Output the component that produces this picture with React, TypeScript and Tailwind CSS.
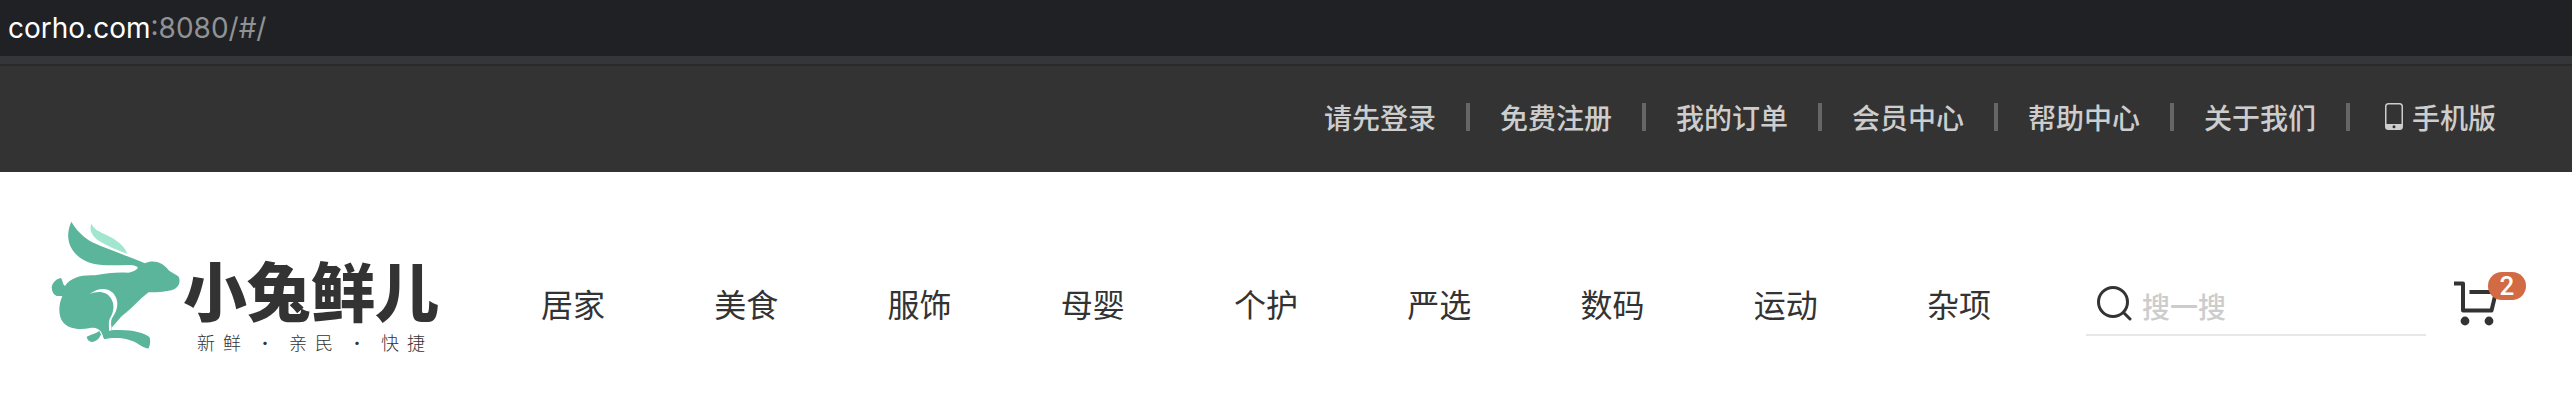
import type { ReactNode } from "react";

const accountLinks = ["请先登录", "免费注册", "我的订单", "会员中心", "帮助中心", "关于我们"];

const categories = ["居家", "美食", "服饰", "母婴", "个护", "严选", "数码", "运动", "杂项"];

const slogan = ["新鲜", "亲民", "快捷"];

function PhoneIcon() {
  return (
    <svg viewBox="0 0 28 28" className="size-7" aria-hidden="true">
      <path
        fill="currentColor"
        fillRule="evenodd"
        d="M8.500 0h11a3.500 3.500 0 0 1 3.500 3.500v20a3.500 3.500 0 0 1-3.500 3.500H8.500A3.500 3.500 0 0 1 5 23.500V3.500A3.500 3.500 0 0 1 8.500 0Zm0 1.500a2 2 0 0 0-2 2V21h15V3.500a2 2 0 0 0-2-2ZM14 22.200a1.500 1.500 0 1 0 0 3 1.500 1.500 0 0 0 0-3Z"
      />
    </svg>
  );
}

function RabbitMark() {
  return (
    <svg viewBox="60 60 390 390" className="size-[130px] shrink-0" aria-hidden="true">
      <path
        fill="#5ab59b"
        d="M124 65C113 90 113 110 117 127C126 160 155 183 190 191C225 199 262 195 297 195C314 195 325 200 323 205C318 211 307 216 295 218C262 216 228 219 195 226C155 224 122 232 105 258C98 254 98 240 93 234C79 236 67 248 65 262C66 276 71 285 80 288L97 288C85 315 85 345 97 364C113 388 150 391 180 384C198 381 209 388 215 398C219 408 220 415 224 418C252 411 297 413 328 434C342 443 352 446 356 445C361 433 362 420 358 411C344 398 300 386 243 391L247 380C261 366 270 352 280 344C300 332 328 297 356 277C386 277 412 276 432 268C448 260 451 245 447 232C440 223 425 219 415 210C400 188 370 178 345 190C328 183 310 176 292 169C255 154 222 144 187 127C161 112 138 90 124 65Z"
      />
      <path
        fill="#fff"
        d="M178 283C205 262 233 262 250 280C269 303 264 330 246 355C242 364 243 374 245 384L242 392L237 392C238 380 234 368 240 355C252 335 254 315 244 297C230 273 202 272 178 283Z"
      />
      <path
        fill="#5ab59b"
        d="M170 410C183 403 197 402 208 393L213 403C208 417 198 425 185 426C176 424 171 418 170 410Z"
      />
      <path
        fill="#a3e6cf"
        d="M184 71C195 94 218 97 243 112C268 126 284 142 292 161C262 150 232 138 206 122C186 108 177 90 184 71Z"
      />
    </svg>
  );
}

function SearchIcon() {
  return (
    <svg viewBox="0 0 36 36" className="size-9 shrink-0" fill="none" stroke="#333" strokeWidth="3" aria-hidden="true">
      <circle cx="17" cy="17" r="14.500" />
      <path d="m28 28 6 6" strokeLinecap="round" />
    </svg>
  );
}

function CartIcon() {
  return (
    <svg viewBox="0 0 44 46" className="h-[46px] w-11" fill="none" stroke="#333" strokeWidth="4" strokeLinejoin="round" aria-hidden="true">
      <path d="M0 2.500h9v27h28.500L42 11H15.500" />
      <circle cx="11" cy="40" r="4.400" fill="#333" stroke="none" />
      <circle cx="35" cy="40" r="4.400" fill="#333" stroke="none" />
    </svg>
  );
}

function TopItem({ children, first = false }: { children: ReactNode; first?: boolean }) {
  return (
    <li className="flex items-center">
      {!first && <span className="mx-[30px] h-7 w-1 bg-[#666]" />}
      <a href="#" className="flex items-center gap-1">
        {children}
      </a>
    </li>
  );
}

export default function App() {
  return (
    <div className="bg-white font-['Noto_Sans_CJK_SC',sans-serif] text-[#333]">
      <div className="flex h-14 items-center bg-[#202124] px-2 font-[Inter,sans-serif] text-[28px] text-[#919295]">
        <span className="text-white">corho.com</span>:8080/#/
      </div>
      <div className="h-2 bg-[#35363a]" />

      <nav className="border-t-2 border-[#28292b] bg-[#333] pb-1">
        <ul className="flex h-[102px] items-center justify-end pr-[76px] text-[28px] leading-7 font-medium text-[#cdcdcd]">
          {accountLinks.map((label, i) => (
            <TopItem key={label} first={i === 0}>
              {label}
            </TopItem>
          ))}
          <TopItem>
            <PhoneIcon />
            手机版
          </TopItem>
        </ul>
      </nav>

      <header className="flex items-start pt-12 pr-[74px] pl-[50px]">
        <a href="#" className="flex w-[390px] shrink-0">
          <RabbitMark />
          <div className="pt-7 pl-[3px]">
            <h1 className="text-[64px] leading-[80px] font-black">小兔鲜儿</h1>
            <p className="mx-[14px] flex items-center justify-between text-lg leading-7 font-light">
              {slogan.map((word, i) => (
                <span key={word} className="contents">
                  {i > 0 && <span>·</span>}
                  <span className="flex gap-2">
                    {Array.from(word).map((char) => (
                      <span key={char}>{char}</span>
                    ))}
                  </span>
                </span>
              ))}
            </p>
          </div>
        </a>

        <ul className="ml-[101px] flex flex-1 justify-between pt-[59px] text-[32px] leading-[48px]">
          {categories.map((name) => (
            <li key={name}>
              <a href="#">{name}</a>
            </li>
          ))}
        </ul>

        <label className="mt-[52px] ml-[95px] flex h-16 w-[340px] items-center gap-2.5 border-b-2 border-[#e7e7e7] pl-2.5">
          <SearchIcon />
          <input
            type="text"
            aria-label="搜一搜"
            placeholder="搜一搜"
            className="min-w-0 flex-1 bg-transparent pt-1.5 text-[28px] leading-10 font-medium outline-none placeholder:text-[#ccc]"
          />
        </label>

        <a href="#" aria-label="购物车" className="relative mt-[61px] ml-7 block">
          <CartIcon />
          <span className="absolute -top-[9px] left-[34px] flex h-7 w-[38px] items-center justify-center rounded-full bg-[#d26a43] font-[Roboto,sans-serif] text-[26px] leading-7 font-medium text-white">
            2
          </span>
        </a>
      </header>
    </div>
  );
}
